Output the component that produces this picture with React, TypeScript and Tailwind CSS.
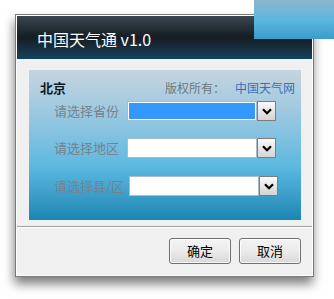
import React from "react";

const font = { fontFamily: '"Noto Sans CJK SC", "Noto Sans", sans-serif' };

function Chevron() {
  return (
    <svg width="10" height="7" viewBox="0 0 10 7">
      <path d="M1 1.2 L5 5.2 L9 1.2" fill="none" stroke="#000" strokeWidth="2.2" />
    </svg>
  );
}

function Select({ selected, gap }: { selected?: boolean; gap: string }) {
  return (
    <div className={`flex h-[20px] ${gap}`}>
      <div className="h-[20px] w-[130px] border border-[#a9bcc9] bg-white p-px">
        <div className={`h-full w-full ${selected ? "bg-[#3399ff]" : "bg-white"}`} />
      </div>
      <div className="flex h-[20px] w-[19px] items-center justify-center border border-[#7d7d7d] bg-gradient-to-b from-[#fafafa] to-[#d4d4d4]">
        <Chevron />
      </div>
    </div>
  );
}

function Row({ label, selected, gap }: { label: string; selected?: boolean; gap: string }) {
  return (
    <div className="flex h-[20px] items-center">
      <span className="text-[13px] leading-[20px] text-[#74838e]">{label}</span>
      <Select selected={selected} gap={gap} />
    </div>
  );
}

function Btn({ label }: { label: string }) {
  return (
    <div className="flex h-[26px] w-[62px] items-center justify-center rounded-[3px] border border-[#707070] bg-gradient-to-b from-[#f3f3f3] via-[#ebebeb] to-[#d8d8d8] text-[13px] text-black shadow-[inset_0_0_0_1px_rgba(255,255,255,0.8)]">
      {label}
    </div>
  );
}

export default function App() {
  return (
    <div className="relative h-[299px] w-[334px] overflow-hidden bg-white" style={font}>
      <div className="ml-[15px] mt-[14px] w-[299px] border border-[#7c7c7c] border-r-[#3a8f99] bg-white p-px shadow-[-1px_7px_10px_rgba(0,0,0,0.5)]">
        <div className="flex h-[43px] items-center bg-gradient-to-b from-[#3b4651] via-[#161d23] to-[#10435e] pl-[20px] pt-[2px] text-[16px] text-white">
          中国天气通 v1.0
        </div>
        <div className="bg-[#f0f0f0] pt-[11px]">
          <div className="ml-[12px] mr-[11px] h-[150px] bg-gradient-to-b from-[#c6d4df] via-[#5ab8e0] via-65% to-[#1a86b3] pt-[10px]">
            <div className="flex h-[16px] items-center justify-between pl-[11px] pr-[6px]">
              <span className="text-[13px] font-bold text-[#0c1a24]">北京</span>
              <span className="text-[12px]">
                <span className="text-[#6d7880]">版权所有：</span>
                <span className="ml-[10px] text-[#3b6eb5]">中国天气网</span>
              </span>
            </div>
            <div className="mt-[5px] flex flex-col gap-[17px] pl-[25px]">
              <Row label="请选择省份" selected gap="ml-[8px]" />
              <Row label="请选择地区" gap="ml-[8px]" />
              <div className="mt-px">
                <Row label="请选择县/区" gap="ml-[5px]" />
              </div>
            </div>
          </div>
          <div className="mt-[6px] h-px bg-[#a0a0a0]" />
          <div className="flex justify-end gap-[8px] border-t border-white pb-[11px] pr-[11px] pt-[10px]">
            <Btn label="确定" />
            <Btn label="取消" />
          </div>
        </div>
      </div>
      <div className="absolute left-[254px] top-0 h-[39px] w-[80px] bg-gradient-to-b from-[#8ab5cd] via-[#5ab7df] to-[#3a9ccb]" />
    </div>
  );
}
